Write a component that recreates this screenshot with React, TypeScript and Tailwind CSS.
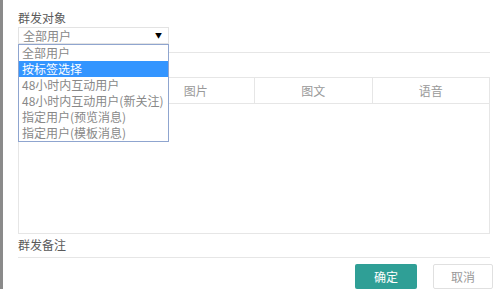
const options = [
  "全部用户",
  "按标签选择",
  "48小时内互动用户",
  "48小时内互动用户(新关注)",
  "指定用户(预览消息)",
  "指定用户(模板消息)",
];

const tabs = ["文字", "图片", "图文", "语音"];

export default function App() {
  return (
    <div
      className="flex h-[289px] w-[499px] overflow-hidden bg-white text-[12px] text-[#5a5a5a]"
      style={{ fontFamily: '"Noto Sans CJK SC", "Noto Sans", sans-serif' }}
    >
      <div className="w-[3px] shrink-0 bg-[#8a8a8a]" />
      <div className="flex flex-1 flex-col pl-[15px] pr-[9px]">
        {/* 群发对象 */}
        <div className="mt-[10px] h-[16px] leading-[16px]">群发对象</div>
        <div className="relative mt-[1px] h-[17px] w-[151px]">
          <div className="flex h-full items-center justify-between border border-[#e3e3e3] pl-[4px] pr-[6px] text-[#888]">
            <span className="leading-[15px]">全部用户</span>
            <span className="text-[7px] leading-none text-black">▼</span>
          </div>
          <div className="absolute left-0 top-[17px] z-10 w-[151px] border border-[#8fa5cf] bg-white">
            {options.map((o, i) => (
              <div
                key={o}
                className={`h-[16px] overflow-hidden pl-[3px] leading-[16px] ${i === 1 ? "bg-[#3395ff] text-white" : "text-[#888]"}`}
              >
                {o}
              </div>
            ))}
          </div>
        </div>
        <div className="mt-[8px] border-t border-[#e6e6e6]" />

        {/* 消息内容 */}
        <div className="mt-[24px] border border-[#e6e6e6]">
          <div className="grid h-[26px] grid-cols-4 border-b border-[#e6e6e6]">
            {tabs.map((t, i) => (
              <div
                key={t}
                className={`flex items-center justify-center text-[#999] ${i > 0 ? "border-l border-[#e6e6e6]" : ""}`}
              >
                {t}
              </div>
            ))}
          </div>
          <div className="h-[129px]" />
        </div>

        {/* 群发备注 */}
        <div className="mt-[3px] h-[16px] leading-[16px]">群发备注</div>
        <div className="mt-[4px] border-t border-[#e6e6e6]" />

        <div className="-mr-[3px] mt-[6px] flex justify-end gap-[16px]">
          <button className="h-[25px] w-[62px] rounded-[2px] bg-[#2f9f96] text-[12px] text-white">确定</button>
          <button className="h-[25px] w-[60px] rounded-[2px] border border-[#e0e0e0] bg-white text-[12px] text-[#999]">
            取消
          </button>
        </div>
      </div>
    </div>
  );
}
